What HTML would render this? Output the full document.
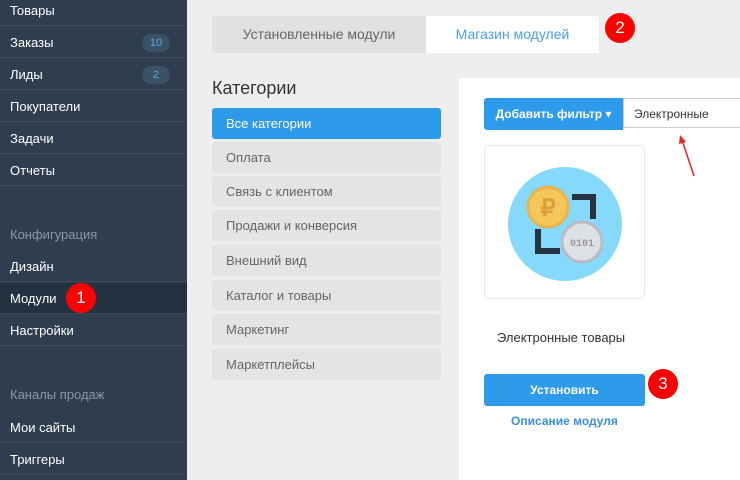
<!DOCTYPE html><html><head><meta charset="utf-8"><style>
body{margin:0;width:740px;height:480px;overflow:hidden;background:#eeeeee;font-family:"Liberation Sans","DejaVu Sans",sans-serif;position:relative}
.sb{position:absolute;left:0;top:0;width:187px;height:480px;background:#2f3e4f}
.it{position:absolute;left:0;width:187px;height:31px;border-bottom:1px solid #3a4a5b;color:#fff;font-size:13px;line-height:31px;padding-left:10px;box-sizing:border-box}
.lab{position:absolute;left:10px;color:#8c96a0;font-size:13px}
.bd{position:absolute;right:17px;top:7px;width:28px;height:18px;border-radius:9px;background:#3b5266;color:#5aa9e6;font-size:11px;line-height:18px;text-align:center}
.rb{position:absolute;width:30px;height:30px;border-radius:50%;background:#f00;color:#fff;font-size:17px;line-height:30px;text-align:center}
.tab{position:absolute;top:16px;height:37px;line-height:37px;text-align:center;font-size:14px}
.cat{position:absolute;left:212px;width:229px;height:31px;background:#e4e4e6;border-radius:3px;color:#666;font-size:13px;line-height:31px;padding-left:14px;box-sizing:border-box}
</style></head><body>
<div class="sb">
<div class="it" style="top:-5px">Товары</div>
<div class="it" style="top:27px">Заказы<span class="bd">10</span></div>
<div class="it" style="top:59px">Лиды<span class="bd">2</span></div>
<div class="it" style="top:91px">Покупатели</div>
<div class="it" style="top:123px">Задачи</div>
<div class="it" style="top:155px">Отчеты</div>
<div class="lab" style="top:227px">Конфигурация</div>
<div class="it" style="top:251px">Дизайн</div>
<div class="it" style="top:283px;background:#243140">Модули</div>
<div class="it" style="top:315px">Настройки</div>
<div class="lab" style="top:387px">Каналы продаж</div>
<div class="it" style="top:412px">Мои сайты</div>
<div class="it" style="top:444px">Триггеры</div>
</div>
<div class="rb" style="left:66px;top:283px">1</div>
<div class="tab" style="left:212px;width:214px;background:#e1e1e1;color:#666">Установленные модули</div>
<div class="tab" style="left:426px;width:173px;background:#fff;color:#4a9fe8">Магазин модулей</div>
<div class="rb" style="left:605px;top:13px">2</div>
<div style="position:absolute;left:212px;top:78px;font-size:18px;color:#333">Категории</div>
<div class="cat" style="top:108px;background:#2e9bea;color:#fff">Все категории</div>
<div class="cat" style="top:142px">Оплата</div>
<div class="cat" style="top:176px">Связь с клиентом</div>
<div class="cat" style="top:210px">Продажи и конверсия</div>
<div class="cat" style="top:245px">Внешний вид</div>
<div class="cat" style="top:280px">Каталог и товары</div>
<div class="cat" style="top:314px">Маркетинг</div>
<div class="cat" style="top:349px">Маркетплейсы</div>
<div style="position:absolute;left:459px;top:78px;width:281px;height:402px;background:#fff"></div>
<div style="position:absolute;left:484px;top:98px;width:139px;height:32px;background:#2e9bea;border-radius:3px 0 0 3px;color:#fff;font-size:12px;font-weight:bold;line-height:32px;text-align:center">Добавить фильтр ▾</div>
<div style="position:absolute;left:623px;top:98px;width:120px;height:30px;border:1px solid #ccc;font-size:12px;line-height:30px;padding-left:10px;box-sizing:border-box;color:#333">Электронные</div>
<svg style="position:absolute;left:670px;top:130px" width="40" height="50"><line x1="24" y1="46" x2="12" y2="10" stroke="#e22" stroke-width="1.5"/><polygon points="10,5 9,14 16,12" fill="#e22"/></svg>
<div style="position:absolute;left:484px;top:145px;width:161px;height:154px;border:1px solid #e6e6e6;border-radius:5px;box-sizing:border-box"></div>
<svg style="position:absolute;left:508px;top:167px" width="114" height="114"><circle cx="57" cy="57" r="57" fill="#86d9fb"/><path d="M64 30h21v22" fill="none" stroke="#263342" stroke-width="6"/><path d="M30 62v22h22" fill="none" stroke="#263342" stroke-width="6"/><circle cx="40" cy="40" r="20" fill="#f5c65a" stroke="#e9b44a" stroke-width="3"/><text x="40" y="49" font-size="24" font-weight="bold" fill="#d9a03a" text-anchor="middle" font-family="Liberation Sans">₽</text><circle cx="74" cy="75" r="20" fill="#dde0e4" stroke="#b8bcc2" stroke-width="3"/><text x="74" y="79" font-size="10" font-weight="bold" fill="#999" text-anchor="middle" font-family="Liberation Mono">0101</text></svg>
<div style="position:absolute;left:497px;top:330px;font-size:13px;color:#333">Электронные товары</div>
<div style="position:absolute;left:484px;top:374px;width:161px;height:32px;background:#2e9bea;border-radius:3px;color:#fff;font-size:12px;font-weight:bold;line-height:32px;text-align:center">Установить</div>
<div class="rb" style="left:648px;top:369px">3</div>
<div style="position:absolute;left:484px;top:414px;width:161px;text-align:center;font-size:12px;color:#3a8fde;font-weight:bold">Описание модуля</div>
</body></html>
